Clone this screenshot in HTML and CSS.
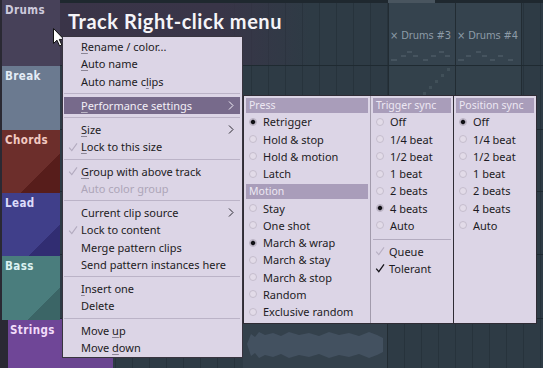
FILE: index.html
```html
<!DOCTYPE html>
<html>
<head>
<meta charset="utf-8">
<link rel="stylesheet" href="styles.css">
</head>
<body>
<div class="screen">
  <div class="tracks">
    <div class="track drums"><span>Drums</span></div>
    <div class="track break"><span>Break</span></div>
    <div class="track chords"><span>Chords</span></div>
    <div class="track lead"><span>Lead</span></div>
    <div class="track bass"><span>Bass</span></div>
    <div class="track strings"><span>Strings</span></div>
  </div>

  <div class="playlist">
    <div class="topbar"><div class="scroll"></div></div>
    <div class="lane lane1">
      <div class="clips">
        <div class="clip"><span class="clip-name">× Drums #3</span>
          <svg class="notes" width="66" height="20" viewBox="0 0 66 20"><g fill="#46545f"><rect x="2" y="16" width="6" height="2"/><rect x="12" y="12" width="5" height="2"/><rect x="18" y="8" width="5" height="2"/><rect x="24" y="12" width="5" height="2"/><rect x="34" y="16" width="5" height="2"/><rect x="42" y="12" width="5" height="2"/><rect x="50" y="8" width="5" height="2"/><rect x="56" y="12" width="5" height="2"/></g></svg>
        </div>
        <div class="clip"><span class="clip-name">× Drums #4</span>
          <svg class="notes" width="66" height="20" viewBox="0 0 66 20"><g fill="#46545f"><rect x="2" y="16" width="6" height="2"/><rect x="10" y="12" width="5" height="2"/><rect x="20" y="8" width="5" height="2"/><rect x="26" y="12" width="5" height="2"/><rect x="34" y="16" width="5" height="2"/><rect x="42" y="12" width="5" height="2"/><rect x="52" y="16" width="5" height="2"/></g></svg>
        </div>
      </div>
    </div>
    <div class="lane lane2">
      <div class="clips">
        <div class="clip dim"><svg width="66" height="30" viewBox="0 0 66 30"><g fill="#415059"><rect x="58" y="2" width="3" height="3"/><rect x="52" y="8" width="3" height="3"/><rect x="46" y="14" width="3" height="3"/><rect x="40" y="20" width="3" height="3"/><rect x="34" y="26" width="3" height="3"/></g></svg></div>
        <div class="clip dim"></div>
      </div>
    </div>
    <div class="lane lane3"></div>
    <div class="lane lane4"></div>
    <div class="lane lane5"></div>
    <div class="lane lane6">
      <div class="str-clip"></div>
      <div class="gap"></div>
      <div class="audio-clip">
        <svg width="143" height="48" viewBox="0 0 143 48"><path d="M4 24 L8 14 L12 17 L16 12 L22 15 L30 13 L38 16 L46 12 L56 15 L66 13 L76 16 L86 12 L96 15 L106 13 L116 16 L126 12 L134 15 L140 18 L140 32 L134 35 L126 38 L116 34 L106 37 L96 35 L86 38 L76 34 L66 37 L56 35 L46 38 L38 34 L30 37 L22 35 L16 38 L12 33 L8 36 Z" fill="#435160"/></svg>
      </div>
    </div>
  </div>

  <h1 class="title">Track Right-click menu</h1>

  <svg class="cursor" width="12" height="19" viewBox="0 0 12 19"><path d="M0.5 0.5 L0.5 15.5 L4 12.2 L6.6 18 L8.8 17 L6.3 11.4 L11 11.4 Z" fill="#ffffff" stroke="#111111" stroke-width="1" stroke-linejoin="round"/></svg>

  <div class="menu">
    <div class="mi"><span class="ck"></span><span class="lb"><u>R</u>ename / color...</span></div>
    <div class="mi"><span class="ck"></span><span class="lb"><u>A</u>uto name</span></div>
    <div class="mi"><span class="ck"></span><span class="lb">Auto name c<u>l</u>ips</span></div>
    <div class="sep"></div>
    <div class="mi active"><span class="ck"></span><span class="lb"><u>P</u>erformance settings</span><svg class="arr" width="6" height="9" viewBox="0 0 6 9"><path d="M1 0.5 L5 4.5 L1 8.5" fill="none" stroke="currentColor" stroke-width="1"/></svg></div>
    <div class="sep"></div>
    <div class="mi"><span class="ck"></span><span class="lb"><u>S</u>ize</span><svg class="arr" width="6" height="9" viewBox="0 0 6 9"><path d="M1 0.5 L5 4.5 L1 8.5" fill="none" stroke="currentColor" stroke-width="1"/></svg></div>
    <div class="mi"><span class="ck light"><svg width="10" height="10" viewBox="0 0 10 10"><path d="M1.2 5.6 L3.8 8.6 L9 1.4" fill="none" stroke="currentColor" stroke-width="1.1"/></svg></span><span class="lb"><u>L</u>ock to this size</span></div>
    <div class="sep"></div>
    <div class="mi"><span class="ck light"><svg width="10" height="10" viewBox="0 0 10 10"><path d="M1.2 5.6 L3.8 8.6 L9 1.4" fill="none" stroke="currentColor" stroke-width="1.1"/></svg></span><span class="lb"><u>G</u>roup with above track</span></div>
    <div class="mi disabled"><span class="ck"></span><span class="lb">Auto color group</span></div>
    <div class="sep"></div>
    <div class="mi"><span class="ck"></span><span class="lb">Current clip source</span><svg class="arr" width="6" height="9" viewBox="0 0 6 9"><path d="M1 0.5 L5 4.5 L1 8.5" fill="none" stroke="currentColor" stroke-width="1"/></svg></div>
    <div class="mi"><span class="ck light"><svg width="10" height="10" viewBox="0 0 10 10"><path d="M1.2 5.6 L3.8 8.6 L9 1.4" fill="none" stroke="currentColor" stroke-width="1.1"/></svg></span><span class="lb">Lock to content</span></div>
    <div class="mi"><span class="ck"></span><span class="lb">Merge pattern clips</span></div>
    <div class="mi"><span class="ck"></span><span class="lb">Send pattern instances here</span></div>
    <div class="sep"></div>
    <div class="mi"><span class="ck"></span><span class="lb"><u>I</u>nsert one</span></div>
    <div class="mi"><span class="ck"></span><span class="lb">Delete</span></div>
    <div class="sep"></div>
    <div class="mi"><span class="ck"></span><span class="lb">Move <u>u</u>p</span></div>
    <div class="mi"><span class="ck"></span><span class="lb">Move <u>d</u>own</span></div>
  </div>

  <div class="submenu">
    <div class="col col1">
      <div class="hd">Press</div>
      <div class="ri"><span class="rb on"></span>Retrigger</div>
      <div class="ri"><span class="rb"></span>Hold &amp; stop</div>
      <div class="ri"><span class="rb"></span>Hold &amp; motion</div>
      <div class="ri"><span class="rb"></span>Latch</div>
      <div class="hd">Motion</div>
      <div class="ri"><span class="rb"></span>Stay</div>
      <div class="ri"><span class="rb"></span>One shot</div>
      <div class="ri"><span class="rb on"></span>March &amp; wrap</div>
      <div class="ri"><span class="rb"></span>March &amp; stay</div>
      <div class="ri"><span class="rb"></span>March &amp; stop</div>
      <div class="ri"><span class="rb"></span>Random</div>
      <div class="ri"><span class="rb"></span>Exclusive random</div>
    </div>
    <div class="col col2">
      <div class="hd">Trigger sync</div>
      <div class="ri"><span class="rb"></span>Off</div>
      <div class="ri"><span class="rb"></span>1/4 beat</div>
      <div class="ri"><span class="rb"></span>1/2 beat</div>
      <div class="ri"><span class="rb"></span>1 beat</div>
      <div class="ri"><span class="rb"></span>2 beats</div>
      <div class="ri"><span class="rb on"></span>4 beats</div>
      <div class="ri"><span class="rb"></span>Auto</div>
      <div class="sep2"></div>
      <div class="ri"><span class="cb light"><svg width="10" height="10" viewBox="0 0 10 10"><path d="M1.2 5.6 L3.8 8.6 L9 1.4" fill="none" stroke="currentColor" stroke-width="1.1"/></svg></span>Queue</div>
      <div class="ri"><span class="cb"><svg width="10" height="10" viewBox="0 0 10 10"><path d="M1.2 5.6 L3.8 8.6 L9 1.4" fill="none" stroke="currentColor" stroke-width="1.3"/></svg></span>Tolerant</div>
    </div>
    <div class="col col3">
      <div class="hd">Position sync</div>
      <div class="ri"><span class="rb on"></span>Off</div>
      <div class="ri"><span class="rb"></span>1/4 beat</div>
      <div class="ri"><span class="rb"></span>1/2 beat</div>
      <div class="ri"><span class="rb"></span>1 beat</div>
      <div class="ri"><span class="rb"></span>2 beats</div>
      <div class="ri"><span class="rb"></span>4 beats</div>
      <div class="ri"><span class="rb"></span>Auto</div>
    </div>
  </div>
</div>
</body>
</html>
```

FILE: styles.css
```css
* { box-sizing: border-box; margin: 0; padding: 0; }
html, body { width: 543px; height: 368px; overflow: hidden; background: #2d3a44; }
body { font-family: "Noto Sans", "Open Sans", sans-serif; }

.screen { position: relative; width: 543px; height: 368px; display: flex; overflow: hidden; }

/* track headers */
.tracks { width: 60px; flex: none; display: flex; flex-direction: column; background: #2a2933; padding-left: 2px; }
.track { font-family: "DejaVu Sans Condensed", "DejaVu Sans", sans-serif; font-weight: bold; font-size: 11.5px; letter-spacing: 0.4px; padding: 3px 0 0 3px; line-height: 15px; }
.drums { height: 66px; background: #474159; color: #cdc9dc; }
.break { height: 64px; background: #6b7a90; color: #e4ecf6; }
.chords { height: 63px; background: linear-gradient(135deg, #6c2e2b 67%, #571d1b 67%); color: #f2c9c2; }
.lead { height: 63px; background: linear-gradient(135deg, #403f8a 74%, #312d72 74%); color: #dcdcfa; }
.bass { height: 64px; background: linear-gradient(135deg, #4a7d7d 73%, #3b6566 73%); color: #dcf2f2; }
.strings { flex: 1; margin-left: 6px; background: #6f4697; color: #f2dcfa; padding-left: 2px; }

/* playlist */
.playlist { flex: 1; display: flex; flex-direction: column;
  background-color: #2e3b45;
  background-image: repeating-linear-gradient(90deg, transparent 0 16px, #27333c 16px 17px);
  background-position: 5px 0; }
.topbar { height: 3px; background: #1f282f; padding-left: 328px; }
.scroll { width: 47px; height: 3px; background: #49555f; }
.lane { border-bottom: 1px solid #1f2a31; }
.lane1 { height: 63px; background: linear-gradient(90deg, #3a3448 0, #393548 160px, rgba(46,59,69,0) 250px); }
.lane2 { height: 64px; }
.lane3, .lane4 { height: 63px; }
.lane5 { height: 64px; }
.lane6 { flex: 1; border-bottom: 0; display: flex; }
.clips { display: flex; margin-left: 328px; height: 100%; }
.clip { width: 67px; height: 100%; background: #35434e; border-left: 1px solid #222c33; position: relative; }
.clip + .clip { border-right: 1px solid #222c33; }
.clip.dim { background: #33414b; }
.clip-name { display: block; padding: 26px 0 0 1px; font-family: "DejaVu Sans Condensed", sans-serif; font-size: 11px; color: #8d9ba7; white-space: nowrap; letter-spacing: -0.1px; }
.notes { display: block; margin-top: 1px; }
.str-clip { width: 53px; background: #6a4590; }
.gap { width: 130px; }
.audio-clip { width: 145px; border-right: 1px solid #222c33; background: #34414c; padding-top: 1px; }
.audio-clip svg { display: block; }

/* title */
.title { position: absolute; left: 68px; top: 7px; font-family: "Lato", sans-serif; font-weight: 700; font-size: 20px; color: #f5f4f8; letter-spacing: 0.55px; line-height: 28px; }

.cursor { position: absolute; left: 53px; top: 28px; }

/* main context menu */
.menu { position: absolute; left: 62px; top: 36px; width: 181px; height: 322px;
  background: #dcd5e6; border: 1px solid #38343f; padding: 1px 2px 1px 1px;
  font-size: 11px; color: #1d1b23; }
.mi { height: 17.3px; display: flex; align-items: center; white-space: nowrap; }
.mi .ck { width: 17px; flex: none; display: flex; justify-content: center; align-items: center; padding-left: 1px; }
.ck.light { color: #b3abbf; }
.mi .ck svg { display: block; }
.mi .lb { flex: 1; }
.mi .arr { flex: none; margin-right: 6px; color: #2a2830; }
.mi u { text-decoration-color: rgba(40,36,50,0.45); text-underline-offset: 2px; }
.mi.active { background: #776a8b; color: #f3eff7; }
.mi.active .arr { color: #f3eff7; }
.mi.active u { text-decoration-color: rgba(255,255,255,0.5); }
.mi.disabled { color: #ada5b8; }
.sep { height: 1px; margin: 3px 0 2.9px; background: #bbb3c7; }

/* performance submenu */
.submenu { position: absolute; left: 243px; top: 95px; height: 229px; display: flex;
  border: 1px solid #2f2c35; background: #dcd5e6; font-size: 11px; color: #1d1b23; }
.col { height: 100%; }
.col1 { width: 127px; border-right: 1px solid #a29bac; }
.col2 { width: 83px; border-right: 1px solid #2f2c35; }
.col3 { width: 82px; }
.hd { height: 15px; margin: 1.5px 2px 0.75px; background: #a99dba; color: #ede8f3; padding-left: 3px; line-height: 15px; font-size: 10.5px; }
.ri { height: 17.25px; display: flex; align-items: center; padding-left: 5px; white-space: nowrap; }
.rb { width: 8px; height: 8px; flex: none; margin-right: 6px; border-radius: 50%; border: 1px solid #c5bdcd; background: #e2dbe8; }
.rb.on { border-color: #b9b1c2; background: radial-gradient(circle, #101014 0 1.6px, #7d7787 2.3px, #e2dbe8 3.2px); }
.cb { width: 10px; flex: none; margin-right: 4px; margin-left: -1px; display: flex; color: #15141a; }
.cb.light { color: #b8b0c3; }
.cb svg { display: block; }
.sep2 { height: 1px; margin: 4.5px 2px 3px; background: #b3abbf; }
```
